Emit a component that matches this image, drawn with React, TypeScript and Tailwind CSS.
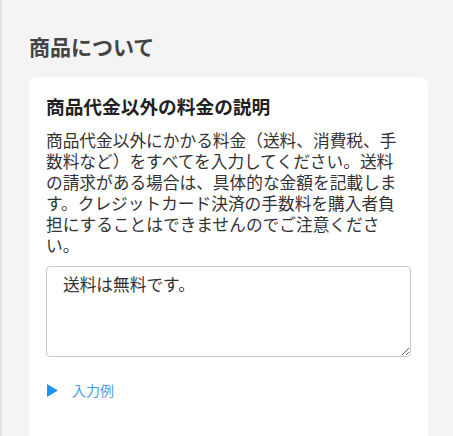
import React from "react";

export default function App() {
  return (
    <div
      className="min-h-[436px] w-full border-l-2 border-[#e1e3eb] bg-[#f4f4f4] pl-[27px] pr-[25px] pt-[31px]"
      style={{ fontFamily: '"Noto Sans CJK JP", "Noto Sans", sans-serif' }}
    >
      <h2 className="text-[21px] font-bold leading-[31px] text-[#444444]">商品について</h2>
      <div className="mt-[15px] rounded-lg bg-white px-[17px] pt-[15px] pb-[40px]">
        <h3 className="text-[18.7px] font-bold leading-[28px] text-[#222222]">
          商品代金以外の料金の説明
        </h3>
        <p className="mt-[10px] pr-[6px] text-[16.7px] leading-[21px] text-[#333333]">
          商品代金以外にかかる料金（送料、消費税、手数料など）をすべてを入力してください。送料の請求がある場合は、具体的な金額を記載します。クレジットカード決済の手数料を購入者負担にすることはできませんのでご注意ください。
        </p>
        <textarea
          className="mt-[10px] block h-[91px] w-full rounded-[4px] border border-[#c8c8c8] bg-white px-[16px] pt-[7px] text-[16.7px] leading-[21px] text-[#333333] outline-none"
          defaultValue="送料は無料です。"
        />
        <div className="mt-[23px] flex items-center gap-[14px] pl-[1px]">
          <svg width="11" height="13" viewBox="0 0 11 13" className="shrink-0">
            <polygon points="0,0 11,6.5 0,13" fill="#1e95f0" />
          </svg>
          <span className="text-[14px] leading-[21px] text-[#4a9de8]">入力例</span>
        </div>
      </div>
    </div>
  );
}
